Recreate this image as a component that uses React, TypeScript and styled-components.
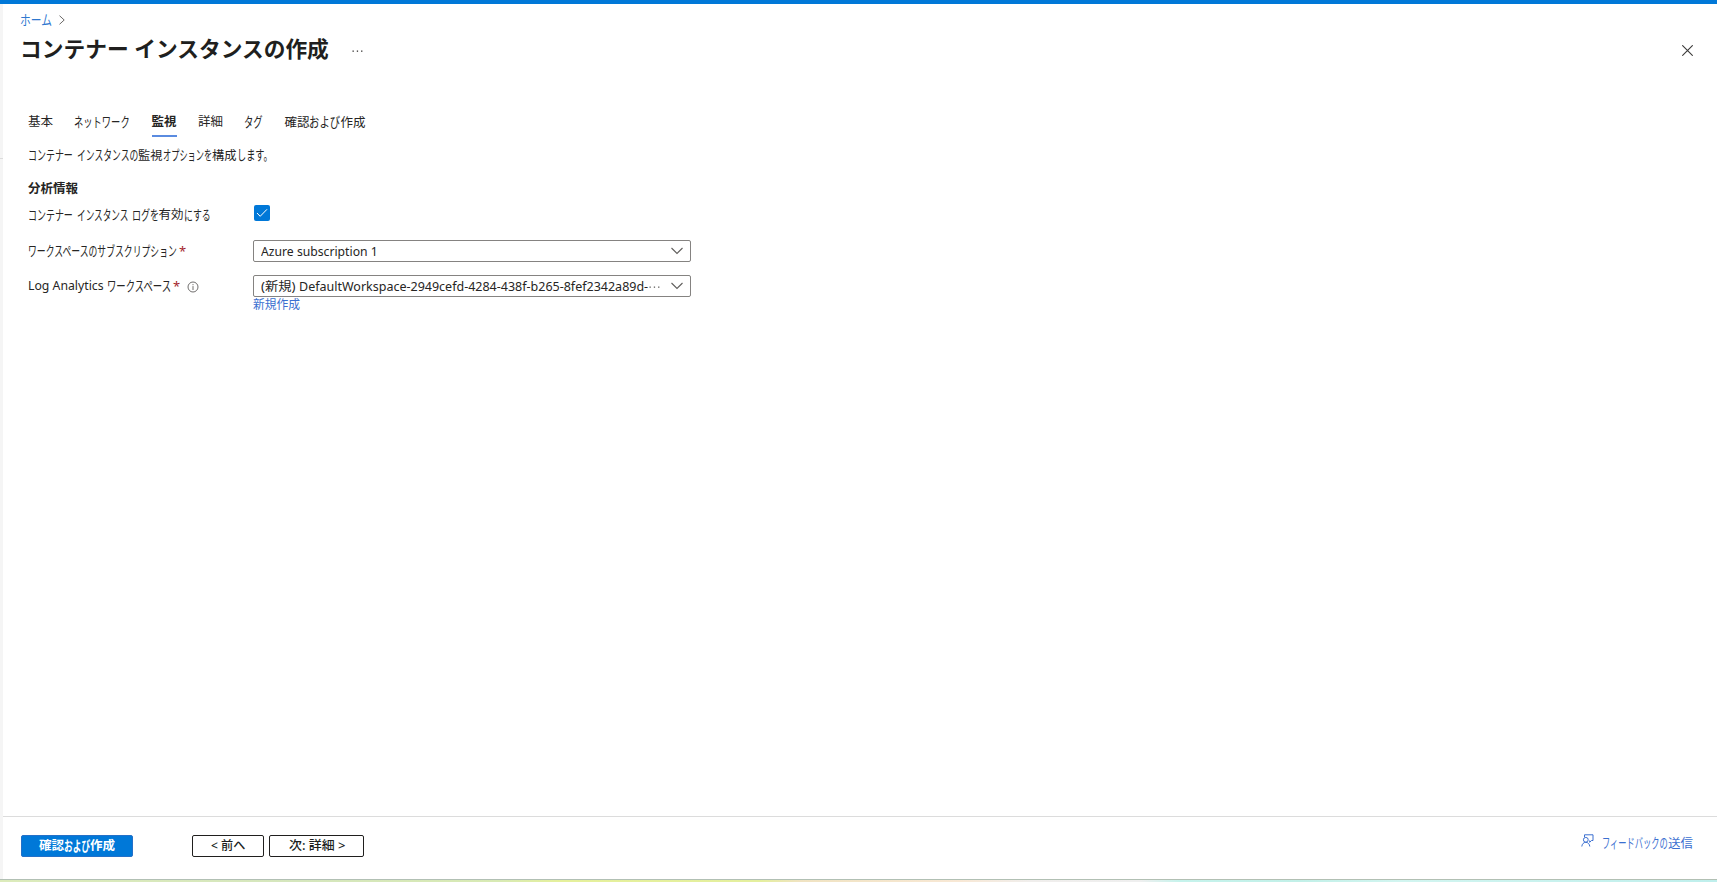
import React, { useLayoutEffect, useRef, useState } from "react";
import styled, { createGlobalStyle, css } from "styled-components";

const GlobalStyle = createGlobalStyle`
  * { box-sizing: border-box; }
  body {
    margin: 0;
    overflow: hidden;
    background: #fff;
    color: #262524;
    font-family: "Noto Sans", "Noto Sans CJK JP", sans-serif;
    font-size: 12.5px;
    line-height: 18px;
  }
`;

/* Narrow UI lettering: each run is condensed to the width it is given. */
const RunBox = styled.span<{ $w: number }>`
  display: inline-block;
  width: ${(p) => p.$w}px;
  white-space: pre;
`;
const RunInk = styled.span<{ $kana: boolean }>`
  display: inline-block;
  transform-origin: 0 50%;
  font-size: ${(p) => (p.$kana ? "1.1em" : "1em")};
`;

const kanaOnly = /^[\u3000-\u30ff]+$/;

function Run({ w, children }: { w: number; children: string }) {
  const ink = useRef<HTMLSpanElement>(null);
  const [scale, setScale] = useState(1);
  useLayoutEffect(() => {
    const natural = ink.current?.offsetWidth ?? w;
    setScale(w / natural);
  }, [w, children]);
  return (
    <RunBox $w={w}>
      <RunInk ref={ink} $kana={kanaOnly.test(children)} style={{ transform: `scaleX(${scale})` }}>
        {children}
      </RunInk>
    </RunBox>
  );
}

const Screen = styled.div`
  display: flex;
  flex-direction: column;
  width: 1717px;
  height: 882px;
`;
const TopBar = styled.div`
  height: 4px;
  flex: none;
  background: #0078d8;
`;
const Middle = styled.div`
  flex: 1;
  display: flex;
  min-height: 0;
`;
const Rail = styled.div`
  width: 3px;
  padding-top: 154px;
  background: #f5f5f5;
`;
const RailLine = styled.div`
  height: 1px;
  background: #dcdcdc;
`;
const Blade = styled.main`
  flex: 1;
  display: flex;
  flex-direction: column;
`;
const BottomStrip = styled.div`
  flex: none;
  height: 3px;
  border-top: 1px solid #b2c0b4;
  background: linear-gradient(90deg, #dcebbb 0, #d5e6bd 300px, #d8eab4 500px, #e5f09c 560px, #e4ef9e 760px, #f0e3c2 800px, #f8e8d5 960px, #f0eeec 1030px, #efefef 1140px, #c6f3ec 1180px, #c2f0e8 1300px, #d2f5f0 1400px, #bfefec 1717px);
`;

const Breadcrumb = styled.nav`
  display: flex;
  align-items: center;
  gap: 7px;
  height: 18px;
  margin: 7px 0 0 17px;
  color: #2f78cf;
`;
const TitleRow = styled.header`
  display: flex;
  align-items: center;
  height: 32px;
  margin-top: 4px;
  padding: 0 24px 0 17px;
`;
const Title = styled.h1`
  margin: -3px 0 0;
  font-size: 22px;
  line-height: 32px;
  font-weight: 700;
  color: #201f1e;
`;
const MoreButton = styled.button`
  display: flex;
  margin: 3px auto 0 23px;
  padding: 0;
  border: 0;
  background: none;
`;
const CloseButton = styled(MoreButton)`
  margin: 2px 0 0;
`;

const Tabs = styled.div`
  display: flex;
  gap: 21.3px;
  height: 24px;
  margin: 48px 0 0 25px;
`;
const Tab = styled.div<{ $active?: boolean }>`
  height: 24px;
  white-space: nowrap;
  ${(p) =>
    p.$active &&
    css`
      font-weight: 700;
      border-bottom: 2px solid #5a8be0;
    `}
`;
const Form = styled.section`
  display: flex;
  flex-direction: column;
  padding: 9px 0 0 25px;
`;
const Text = styled.p`
  height: 18px;
  margin: 0;
  white-space: nowrap;
`;
const Heading = styled.h2`
  height: 18px;
  margin: 16px 0 3px;
  font-size: 12.5px;
  line-height: 18px;
  font-weight: 700;
`;
const Field = styled.div<{ $gap: number }>`
  display: flex;
  height: 22px;
  margin-top: ${(p) => p.$gap}px;
`;
const Label = styled.label`
  display: flex;
  align-items: center;
  width: 225px;
  height: 22px;
  white-space: nowrap;
`;
const Star = styled.span`
  margin-left: 2px;
  color: #a4262c;
  font-size: 13px;
`;
const InfoSlot = styled.span`
  display: flex;
  margin: 1px 0 0 7px;
`;
const Checkbox = styled.span`
  display: flex;
  align-items: center;
  justify-content: center;
  width: 16px;
  height: 16px;
  margin: 1px 0 0 1px;
  border-radius: 2px;
  background: #0078d8;
`;
const Select = styled.div`
  display: flex;
  align-items: center;
  width: 438px;
  height: 22px;
  padding: 1px 7px 0;
  border: 1px solid #858381;
  border-radius: 2px;
  white-space: nowrap;
`;
const Chevron = styled.svg`
  margin: -1px 0 0 auto;
`;
const Dots = styled.span`
  display: flex;
  margin: 0 0 0 1px;
`;
const CreateLink = styled.a`
  margin: -1px 0 0 225px;
  color: #3b6fd0;
`;

const Footer = styled.footer`
  display: flex;
  height: 63px;
  margin-top: auto;
  padding: 18px 24px 0 18px;
  border-top: 1px solid #dcdcdc;
`;
const Button = styled.button<{ $w: number; $primary?: boolean }>`
  display: flex;
  align-items: center;
  justify-content: center;
  width: ${(p) => p.$w}px;
  height: 22px;
  margin: 0;
  padding: 0;
  border: 1px solid ${(p) => (p.$primary ? "#2470c8" : "#201f1e")};
  border-radius: 2px;
  background: ${(p) => (p.$primary ? "#0078d8" : "#fff")};
  color: ${(p) => (p.$primary ? "#fff" : "#201f1e")};
  font-family: inherit;
  font-size: 12.5px;
  font-weight: ${(p) => (p.$primary ? 700 : 500)};
  line-height: 18px;
  white-space: pre;
`;
const ButtonGroup = styled.div`
  display: flex;
  gap: 5px;
  margin-left: 59px;
`;
const Feedback = styled.a`
  display: flex;
  gap: 8px;
  height: 18px;
  margin-left: auto;
  margin-top: -1px;
  color: #3b6fd0;
  white-space: nowrap;
`;

function Ellipsis({ color }: { color: string }) {
  return (
    <svg width="11" height="4" viewBox="0 0 11 4" fill={color}>
      <rect x="0.5" y="1.5" width="1.3" height="1.3" />
      <rect x="4.8" y="1.5" width="1.3" height="1.3" />
      <rect x="9.1" y="1.5" width="1.3" height="1.3" />
    </svg>
  );
}

function Down() {
  return (
    <Chevron width="12" height="8" viewBox="0 0 12 8" fill="none" stroke="#605e5c" strokeWidth="1.1">
      <path d="M0.5 1 6 6.5 11.5 1" />
    </Chevron>
  );
}

export default function App() {
  return (
    <Screen>
      <GlobalStyle />
      <TopBar />
      <Middle>
        <Rail>
          <RailLine />
        </Rail>
        <Blade>
          <Breadcrumb>
            <Run w={32}>ホーム</Run>
            <svg width="6" height="10" viewBox="0 0 6 10" fill="none" stroke="#6b6967">
              <path d="M0.5 0.7 5.2 5 0.5 9.3" />
            </svg>
          </Breadcrumb>
          <TitleRow>
            <Title>
              <Run w={309}>コンテナー インスタンスの作成</Run>
            </Title>
            <MoreButton aria-label="その他">
              <Ellipsis color="#323130" />
            </MoreButton>
            <CloseButton aria-label="閉じる">
              <svg width="11" height="11" viewBox="0 0 11 11" fill="none" stroke="#3b3a39" strokeWidth="1.1">
                <path d="M0.3 0.3 10.7 10.7M10.7 0.3 0.3 10.7" />
              </svg>
            </CloseButton>
          </TitleRow>
          <Tabs>
            <Tab><Run w={25}>基本</Run></Tab>
            <Tab><Run w={56}>ネットワーク</Run></Tab>
            <Tab $active><Run w={25}>監視</Run></Tab>
            <Tab><Run w={25}>詳細</Run></Tab>
            <Tab><Run w={19}>タグ</Run></Tab>
            <Tab><Run w={25}>確認</Run><Run w={31}>および</Run><Run w={25}>作成</Run></Tab>
          </Tabs>
          <Form>
            <Text>
              <Run w={45}>コンテナー</Run><Run w={3.5}>{" "}</Run><Run w={61.5}>インスタンスの</Run><Run w={24.5}>監視</Run>
              <Run w={49.5}>オプションを</Run><Run w={24.5}>構成</Run><Run w={36}>します。</Run>
            </Text>
            <Heading><Run w={50}>分析情報</Run></Heading>
            <Field $gap={3}>
              <Label>
                <Run w={45}>コンテナー</Run><Run w={3.5}>{" "}</Run><Run w={51.5}>インスタンス</Run><Run w={3.5}>{" "}</Run><Run w={27}>ログを</Run>
                <Run w={25}>有効</Run><Run w={26.5}>にする</Run>
              </Label>
              <Checkbox>
                <svg width="12" height="10" viewBox="0 0 12 10" fill="none" stroke="#fff" strokeWidth="1">
                  <path d="M1 5 4.2 8.3 11 1.3" />
                </svg>
              </Checkbox>
            </Field>
            <Field $gap={14}>
              <Label>
                <Run w={149}>ワークスペースのサブスクリプション</Run><Star>*</Star>
              </Label>
              <Select><Run w={117}>Azure subscription 1</Run><Down /></Select>
            </Field>
            <Field $gap={13}>
              <Label>
                <Run w={75.5}>Log Analytics</Run><Run w={3.5}>{" "}</Run><Run w={64}>ワークスペース</Run><Star>*</Star>
                <InfoSlot>
                  <svg width="12" height="12" viewBox="0 0 12 12" fill="none" stroke="#605e5c" strokeWidth="0.9">
                    <circle cx="6" cy="6" r="5" />
                    <path d="M6 5.1V9M6 3.1V4.2" />
                  </svg>
                </InfoSlot>
              </Label>
              <Select>
                <Run w={35}>(新規)</Run><Run w={3}>{" "}</Run>
                <Run w={349}>DefaultWorkspace-2949cefd-4284-438f-b265-8fef2342a89d-</Run>
                <Dots><Ellipsis color="#605e5c" /></Dots>
                <Down />
              </Select>
            </Field>
            <CreateLink><Run w={47}>新規作成</Run></CreateLink>
          </Form>
          <Footer>
            <Button $w={112} $primary>
              <Run w={25}>確認</Run><Run w={26}>および</Run><Run w={25}>作成</Run>
            </Button>
            <ButtonGroup>
              <Button $w={72}><Run w={34}>{"< 前へ"}</Run></Button>
              <Button $w={95}><Run w={57}>{"次: 詳細 >"}</Run></Button>
            </ButtonGroup>
            <Feedback>
              <svg width="13" height="14" viewBox="0 0 13 14" fill="none" stroke="#3b6fd0" strokeWidth="1">
                <path d="M3.5 3V0.8H12V6.5H10.5L8.7 8.3V6.5" />
                <circle cx="4.8" cy="5.8" r="2.4" />
                <path d="M0.8 12.5C1 10 2.7 8.3 4.8 8.3S8.6 10 8.8 12.5" />
              </svg>
              <span><Run w={66}>フィードバックの</Run><Run w={25}>送信</Run></span>
            </Feedback>
          </Footer>
        </Blade>
      </Middle>
      <BottomStrip />
    </Screen>
  );
}
